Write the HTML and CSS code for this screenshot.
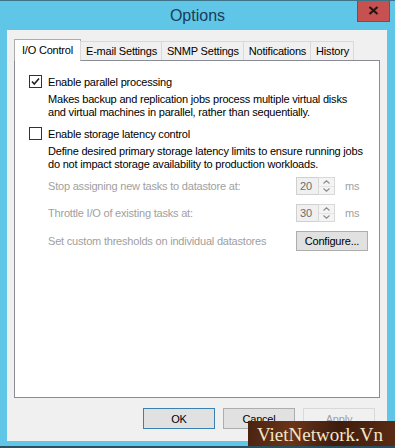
FILE: index.html
```html
<!DOCTYPE html>
<html lang="en">
<head>
  <meta charset="UTF-8" />
  <meta name="viewport" content="width=device-width, initial-scale=1.0"/>
  <title>Options</title>
  <link rel="stylesheet" href="styles.css">
</head>
<body>
  <div class="window">
    <div class="titlebar">
      <span></span>
      <span class="title">Options</span>
      <button class="close-btn" aria-label="Close">
        <svg width="11" height="9" viewBox="0 0 11 9"><path d="M1.5 1 L9.5 8 M9.5 1 L1.5 8" stroke="#2a1414" stroke-width="2.2" fill="none"/></svg>
      </button>
    </div>

    <div class="client">
      <div class="tabs">
        <div class="tab active">I/O Control</div>
        <div class="tab">E-mail Settings</div>
        <div class="tab">SNMP Settings</div>
        <div class="tab">Notifications</div>
        <div class="tab">History</div>
      </div>

      <div class="tab-panel">
        <label class="check-row">
          <span class="checkbox">
            <svg width="11" height="11" viewBox="0 0 11 11"><path d="M2 5.5 L4.3 8 L9 2.5" stroke="#222" stroke-width="1.6" fill="none"/></svg>
          </span>
          Enable parallel processing
        </label>
        <p class="desc">Makes backup and replication jobs process multiple virtual disks<br>and virtual machines in parallel, rather than sequentially.</p>

        <label class="check-row second">
          <span class="checkbox"></span>
          Enable storage latency control
        </label>
        <p class="desc">Define desired primary storage latency limits to ensure running jobs<br>do not impact storage availability to production workloads.</p>

        <div class="thresholds">
          <span class="muted">Stop assigning new tasks to datastore at:</span>
          <div class="spinner">
            <span class="spin-value">20</span>
            <span class="spin-arrows">
              <span class="arrow"><svg width="7" height="4" viewBox="0 0 7 4"><path d="M0.5 3.5 L3.5 0.8 L6.5 3.5" stroke="#8a8a8a" stroke-width="1.1" fill="none"/></svg></span>
              <span class="arrow"><svg width="7" height="4" viewBox="0 0 7 4"><path d="M0.5 0.5 L3.5 3.2 L6.5 0.5" stroke="#8a8a8a" stroke-width="1.1" fill="none"/></svg></span>
            </span>
          </div>
          <span class="muted unit">ms</span>

          <span class="muted">Throttle I/O of existing tasks at:</span>
          <div class="spinner">
            <span class="spin-value">30</span>
            <span class="spin-arrows">
              <span class="arrow"><svg width="7" height="4" viewBox="0 0 7 4"><path d="M0.5 3.5 L3.5 0.8 L6.5 3.5" stroke="#8a8a8a" stroke-width="1.1" fill="none"/></svg></span>
              <span class="arrow"><svg width="7" height="4" viewBox="0 0 7 4"><path d="M0.5 0.5 L3.5 3.2 L6.5 0.5" stroke="#8a8a8a" stroke-width="1.1" fill="none"/></svg></span>
            </span>
          </div>
          <span class="muted unit">ms</span>

          <span class="muted">Set custom thresholds on individual datastores</span>
          <button class="btn configure">Configure...</button>
        </div>
      </div>

      <div class="dialog-buttons">
        <button class="btn default">OK</button>
        <button class="btn">Cancel</button>
        <button class="btn" disabled>Apply</button>
      </div>
    </div>

    <div class="watermark">VietNetwork.Vn</div>
  </div>
</body>
</html>
```

FILE: styles.css
```css
* { box-sizing: border-box; }
body {
  margin: 0;
  font-family: 'Liberation Sans', Arial, sans-serif;
  font-size: 11px;
  letter-spacing: -0.2px;
  color: #000;
}
.window {
  position: relative;
  width: 395px;
  height: 448px;
  background-color: #5fc6e7;
  border-top: 1px solid #3d7488;
  border-bottom: 2px solid #2c5060;
  overflow: hidden;
}
.titlebar {
  height: 29px;
  display: grid;
  grid-template-columns: 1fr auto 1fr;
  align-items: start;
}
.title {
  font-size: 16px;
  letter-spacing: 0;
  color: #1b3c57;
  padding-top: 6px;
}
.close-btn {
  justify-self: end;
  margin-right: 5px;
  margin-top: -1px;
  width: 33px;
  height: 22px;
  padding: 0;
  border: 1px solid #9a4040;
  border-top: none;
  background-color: #c75050;
  display: flex;
  align-items: center;
  justify-content: center;
}
.client {
  height: 411px;
  margin: 0 8px 0 7px;
  padding: 9px 7px 0 7px;
  background-color: #f0f0f0;
}
.tabs {
  position: relative;
  z-index: 1;
  display: flex;
  align-items: flex-end;
  height: 21px;
}
.tab {
  height: 19px;
  padding: 3px 4px 0 5px;
  border: 1px solid #d9d9d9;
  border-bottom: none;
  margin-left: -1px;
  background-color: #f0f0f0;
  white-space: nowrap;
}
.tab.active {
  height: 22px;
  margin-bottom: -1px;
  margin-left: 0;
  padding: 4px 7px 0 7px;
  background-color: #fff;
  border-color: #acacac;
}
.tab-panel {
  height: 338px;
  border: 1px solid #898c95;
  background-color: #fff;
  padding: 14px 14px;
}
.check-row {
  display: flex;
  align-items: center;
  gap: 6px;
  height: 13px;
}
.check-row.second { margin-top: 8px; }
.checkbox {
  width: 13px;
  height: 13px;
  border: 1px solid #333;
  background-color: #fff;
  display: flex;
  align-items: center;
  justify-content: center;
}
.desc {
  margin: 5px 0 0 19px;
  line-height: 13px;
  white-space: nowrap;
}
.thresholds {
  margin: 6px 0 0 19px;
  display: grid;
  grid-template-columns: 248px 40px auto;
  grid-template-rows: 18px 18px 20px;
  row-gap: 9px;
  align-items: center;
  white-space: nowrap;
}
.muted { color: #a0a0a0; }
.unit { padding-left: 9px; }
.spinner {
  display: flex;
  height: 18px;
}
.spin-value {
  width: 23px;
  border: 1px solid #d0d0d0;
  background-color: #f0f0f0;
  color: #6d6d6d;
  padding: 2px 0 0 3px;
}
.spin-arrows {
  width: 17px;
  margin-left: -1px;
  display: flex;
  flex-direction: column;
  border: 1px solid #d9d9d9;
  background-color: #f4f4f4;
}
.arrow {
  flex: 1;
  display: flex;
  align-items: center;
  justify-content: center;
}
.arrow + .arrow { border-top: 1px solid #e4e4e4; }
.btn {
  font-family: inherit;
  font-size: 11px;
  letter-spacing: -0.2px;
  height: 21px;
  padding: 0;
  border: 1px solid #adadad;
  background-color: #e1e1e1;
  color: #000;
}
.configure {
  grid-column: 2 / 4;
  width: 72px;
  height: 20px;
}
.dialog-buttons {
  display: flex;
  justify-content: flex-end;
  gap: 8px;
  margin-top: 10px;
  padding-right: 5px;
}
.dialog-buttons .btn { width: 72px; }
.btn.default { border-color: #3c7fb1; }
.btn:disabled {
  border-color: #d9d9d9;
  background-color: #f0f0f0;
  color: #a0a0a0;
}
.watermark {
  position: absolute;
  right: 0;
  bottom: -2px;
  width: 147px;
  height: 27px;
  background: linear-gradient(100deg, #4a2312 0%, #6a3418 30%, #3e1c0e 60%, #5b2b14 100%);
  color: #f3e6c8;
  font-family: 'Liberation Serif', 'Times New Roman', serif;
  font-size: 19px;
  letter-spacing: 0;
  line-height: 27px;
  padding-left: 9px;
  white-space: nowrap;
}
```
